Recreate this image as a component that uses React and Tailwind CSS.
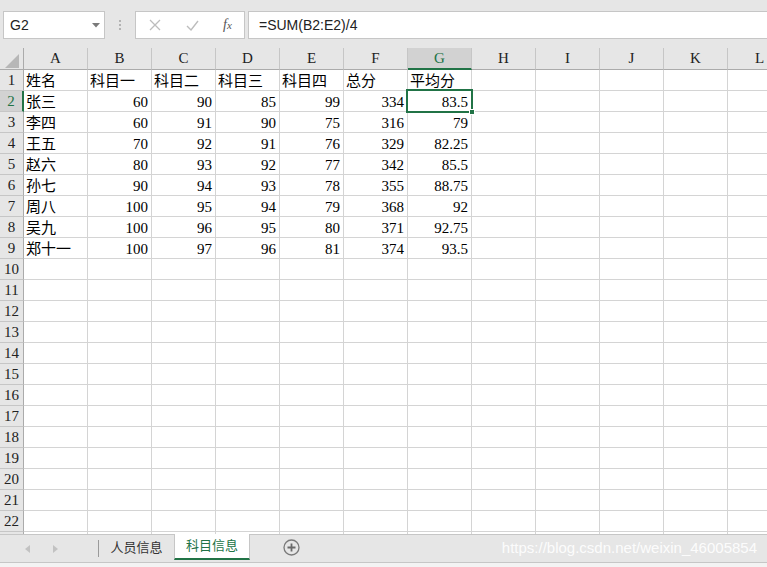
import React from "react";

const COLS = ["A", "B", "C", "D", "E", "F", "G", "H", "I", "J", "K", "L"];
const DATA = [
  ["姓名", "科目一", "科目二", "科目三", "科目四", "总分", "平均分"],
  ["张三", 60, 90, 85, 99, 334, 83.5],
  ["李四", 60, 91, 90, 75, 316, 79],
  ["王五", 70, 92, 91, 76, 329, 82.25],
  ["赵六", 80, 93, 92, 77, 342, 85.5],
  ["孙七", 90, 94, 93, 78, 355, 88.75],
  ["周八", 100, 95, 94, 79, 368, 92],
  ["吴九", 100, 96, 95, 80, 371, 92.75],
  ["郑十一", 100, 97, 96, 81, 374, 93.5],
];

const cellFont = { fontFamily: '"Liberation Serif", "Noto Sans CJK SC", serif' };
const uiFont = { fontFamily: '"Liberation Sans", "Noto Sans CJK SC", sans-serif' };

function FormulaBar() {
  return (
    <div className="h-[48px] shrink-0 flex items-start pt-[11px] bg-[#e6e6e6]">
      <div
        className="ml-[3px] w-[102px] h-[28px] bg-white border border-[#c6c6c6] flex items-center justify-between pl-[6px] pr-[4px] text-[14px] text-[#222]"
        style={uiFont}
      >
        <span>G2</span>
        <svg width="8" height="5" viewBox="0 0 8 5">
          <polygon points="0,0 8,0 4,4.5" fill="#7a7a7a" />
        </svg>
      </div>
      <div className="w-[30px] h-[28px] flex flex-col items-center justify-center gap-[2px]">
        <div className="w-[2px] h-[2px] bg-[#b3b3b3]" />
        <div className="w-[2px] h-[2px] bg-[#b3b3b3]" />
        <div className="w-[2px] h-[2px] bg-[#b3b3b3]" />
      </div>
      <div className="w-[110px] h-[28px] bg-white border border-[#c6c6c6] flex items-center pl-[12px]">
        <svg width="12" height="12" viewBox="0 0 12 12" className="ml-[1px]">
          <path d="M1 1 L11 11 M11 1 L1 11" stroke="#bdbdbd" strokeWidth="1.3" fill="none" />
        </svg>
        <svg width="13" height="11" viewBox="0 0 13 11" className="ml-[25px]">
          <path d="M1 6 L5 10 L12 1" stroke="#bdbdbd" strokeWidth="1.4" fill="none" />
        </svg>
        <span
          className="ml-[24px] text-[14px] italic text-[#555] leading-none"
          style={{ fontFamily: '"Liberation Serif", serif' }}
        >
          f<span className="text-[11px]">x</span>
        </span>
      </div>
      <div
        className="ml-[3px] flex-1 h-[28px] bg-white border-y border-l border-[#c6c6c6] flex items-center pl-[10px] text-[14px] text-[#222]"
        style={uiFont}
      >
        =SUM(B2:E2)/4
      </div>
    </div>
  );
}

function HeaderRow() {
  return (
    <>
      <div className="h-[22px] bg-[#e6e6e6] border-r border-b border-[#ababab] relative">
        <svg width="24" height="22" viewBox="0 0 24 22" className="absolute left-0 top-0">
          <polygon points="5,20 19,20 19,6" fill="#b7b7b7" />
        </svg>
      </div>
      {COLS.map((c) => {
        const sel = c === "G";
        return (
          <div
            key={c}
            className={
              sel
                ? "h-[22px] bg-[#d2d2d2] border-r border-[#c6c6c6] border-b-2 border-b-[#217346] text-[#217346] flex items-center justify-center text-[15px]"
                : "h-[22px] bg-[#e6e6e6] border-r border-[#c6c6c6] border-b border-b-[#ababab] text-[#222] flex items-center justify-center text-[15px]"
            }
            style={cellFont}
          >
            {c}
          </div>
        );
      })}
    </>
  );
}

function Row({ r }) {
  const vals = DATA[r - 1] || [];
  const selRow = r === 2;
  return (
    <>
      <div
        className={
          selRow
            ? "h-[21px] bg-[#d2d2d2] border-b border-[#c6c6c6] border-r-2 border-r-[#217346] text-[#217346] flex items-center justify-center text-[15px]"
            : "h-[21px] bg-[#e6e6e6] border-b border-[#c6c6c6] border-r border-r-[#ababab] text-[#222] flex items-center justify-center text-[15px]"
        }
        style={cellFont}
      >
        {r}
      </div>
      {COLS.map((c, i) => {
        const v = vals[i];
        const isNum = typeof v === "number";
        const sel = r === 2 && c === "G";
        return (
          <div
            key={c}
            className={
              "h-[21px] bg-white border-r border-b border-[#d4d4d4] text-[15px] leading-[22px] text-black whitespace-nowrap " +
              (sel ? "relative z-10 " : "") +
              (isNum ? "text-right pr-[3px]" : "text-left pl-[2px]")
            }
            style={cellFont}
          >
            {v !== undefined ? String(v) : ""}
            {sel && (
              <div className="absolute -left-[2px] -top-[2px] w-[67px] h-[24px] border-2 border-[#217346] pointer-events-none">
                <div className="absolute -right-[4px] -bottom-[4px] w-[6px] h-[6px] bg-[#217346] border border-white" />
              </div>
            )}
          </div>
        );
      })}
    </>
  );
}

function Grid() {
  const rows = [];
  for (let r = 1; r <= 23; r++) rows.push(<Row key={r} r={r} />);
  return (
    <div className="h-[486px] shrink-0 overflow-hidden bg-white">
      <div className="grid grid-cols-[24px_repeat(12,64px)] w-[792px]">
        <HeaderRow />
        {rows}
      </div>
    </div>
  );
}

function TabBar() {
  return (
    <div className="h-[28px] shrink-0 bg-[#e6e6e6] border-t border-[#c6c6c6] flex items-start relative">
      <div className="w-[98px] h-[27px] flex items-center">
        <svg width="5" height="8" viewBox="0 0 5 8" className="ml-[25px]">
          <polygon points="5,0 5,8 0,4" fill="#c2c2c2" />
        </svg>
        <svg width="5" height="8" viewBox="0 0 5 8" className="ml-[23px]">
          <polygon points="0,0 0,8 5,4" fill="#c2c2c2" />
        </svg>
      </div>
      <div className="w-px h-[17px] bg-[#9a9a9a] mt-[5px]" />
      <div
        className="w-[75px] h-[25px] flex items-center justify-center text-[13px] text-[#333]"
        style={uiFont}
      >
        人员信息
      </div>
      <div
        className="w-[76px] h-[26px] -mt-px bg-white border-x border-[#c6c6c6] border-b-2 border-b-[#217346] flex items-center justify-center text-[13px] text-[#217346]"
        style={uiFont}
      >
        科目信息
      </div>
      <div className="ml-[33px] h-[25px] flex items-center">
        <svg width="17" height="17" viewBox="0 0 17 17">
          <circle cx="8.5" cy="8.5" r="7.5" stroke="#7a7a7a" strokeWidth="1.3" fill="none" />
          <path d="M8.5 4.5 V12.5 M4.5 8.5 H12.5" stroke="#6a6a6a" strokeWidth="1.8" />
        </svg>
      </div>
      <div
        className="ml-auto mr-[10px] h-[27px] flex items-center text-[15px] text-[rgba(255,255,255,0.9)]"
        style={uiFont}
      >
        https://blog.csdn.net/weixin_46005854
      </div>
    </div>
  );
}

export default function App() {
  return (
    <div className="w-[767px] h-[567px] overflow-hidden bg-[#e6e6e6] flex flex-col">
      <FormulaBar />
      <Grid />
      <TabBar />
      <div className="flex-1 bg-[#f3f3f3] border-t border-[#c6c6c6]" />
    </div>
  );
}
